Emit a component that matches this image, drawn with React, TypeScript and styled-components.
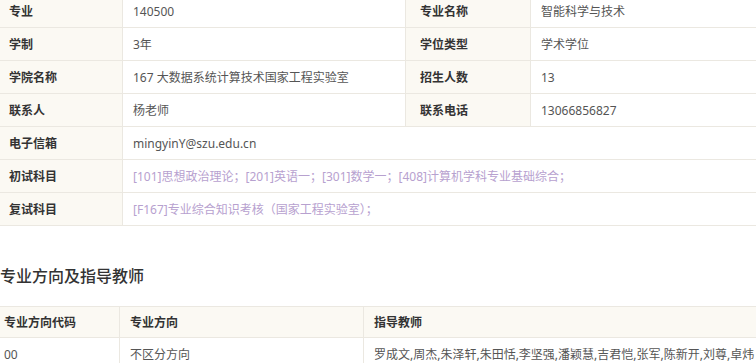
import styled, { createGlobalStyle } from 'styled-components'

const GlobalStyle = createGlobalStyle`
  html, body {
    margin: 0;
    padding: 0;
    background: #fff;
    overflow: hidden;
  }
  body {
    font-family: 'Noto Sans', 'Noto Sans CJK SC', sans-serif;
    font-size: 12px;
    color: #555;
  }
`

const Page = styled.div`
  width: 780px;
  margin: -6px 0 0 -2px;
`

const InfoTable = styled.table`
  width: 100%;
  border-collapse: collapse;
  table-layout: fixed;
`

const Row = styled.tr<{ $height?: number }>`
  height: ${(p) => p.$height ?? 33}px;
`

const Label = styled.td<{ $pad?: number }>`
  background: #fbf9f3;
  color: #333;
  font-weight: 600;
  padding: 0 0 0 ${(p) => p.$pad ?? 10}px;
  border: 1px solid #ebe8e1;
  white-space: nowrap;
`

const Value = styled.td<{ $link?: boolean; $pad?: number }>`
  color: ${(p) => (p.$link ? '#b7a1cf' : '#555')};
  padding: 0 0 0 ${(p) => p.$pad ?? 10}px;
  border: 1px solid #ebe8e1;
  white-space: nowrap;
  overflow: hidden;
`

const Heading = styled.h3`
  margin: 36px 0 0 2px;
  font-size: 16px;
  font-weight: 500;
  color: #333;
  line-height: 28px;
`

const DirTable = styled.table`
  width: 100%;
  border-collapse: collapse;
  table-layout: fixed;
  margin: 16px 0 0 -3px;
`

const Head = styled.th<{ $pad?: number }>`
  background: #fbf9f3;
  color: #333;
  font-weight: 600;
  text-align: left;
  padding: 0 0 0 ${(p) => p.$pad ?? 10}px;
  border: 1px solid #ebe8e1;
  white-space: nowrap;
`

const info: [string, string, string, string][] = [
  ['专业', '140500', '专业名称', '智能科学与技术'],
  ['学制', '3年', '学位类型', '学术学位'],
  ['学院名称', '167 大数据系统计算技术国家工程实验室', '招生人数', '13'],
  ['联系人', '杨老师', '联系电话', '13066856827'],
]

const wide: { label: string; value: string; link?: boolean }[] = [
  { label: '电子信箱', value: 'mingyinY@szu.edu.cn' },
  {
    label: '初试科目',
    value: '[101]思想政治理论；[201]英语一；[301]数学一；[408]计算机学科专业基础综合；',
    link: true,
  },
  { label: '复试科目', value: '[F167]专业综合知识考核（国家工程实验室）；', link: true },
]

export default function App() {
  return (
    <Page>
      <GlobalStyle />
      <InfoTable>
        <colgroup>
          <col style={{ width: 124 }} />
          <col style={{ width: 283 }} />
          <col style={{ width: 125 }} />
          <col />
        </colgroup>
        <tbody>
          {info.map((r) => (
            <Row key={r[0]}>
              <Label>{r[0]}</Label>
              <Value>{r[1]}</Value>
              <Label $pad={14}>{r[2]}</Label>
              <Value>{r[3]}</Value>
            </Row>
          ))}
          {wide.map((r) => (
            <Row key={r.label}>
              <Label>{r.label}</Label>
              <Value colSpan={3} $link={r.link}>
                {r.value}
              </Value>
            </Row>
          ))}
        </tbody>
      </InfoTable>
      <Heading>专业方向及指导教师</Heading>
      <DirTable>
        <colgroup>
          <col style={{ width: 124 }} />
          <col style={{ width: 244 }} />
          <col />
        </colgroup>
        <thead>
          <Row $height={31}>
            <Head $pad={8}>专业方向代码</Head>
            <Head>专业方向</Head>
            <Head>指导教师</Head>
          </Row>
        </thead>
        <tbody>
          <Row $height={33}>
            <Value $pad={8}>00</Value>
            <Value>不区分方向</Value>
            <Value>罗成文,周杰,朱泽轩,朱田恬,李坚强,潘颖慧,吉君恺,张军,陈新开,刘尊,卓炜</Value>
          </Row>
        </tbody>
      </DirTable>
    </Page>
  )
}
